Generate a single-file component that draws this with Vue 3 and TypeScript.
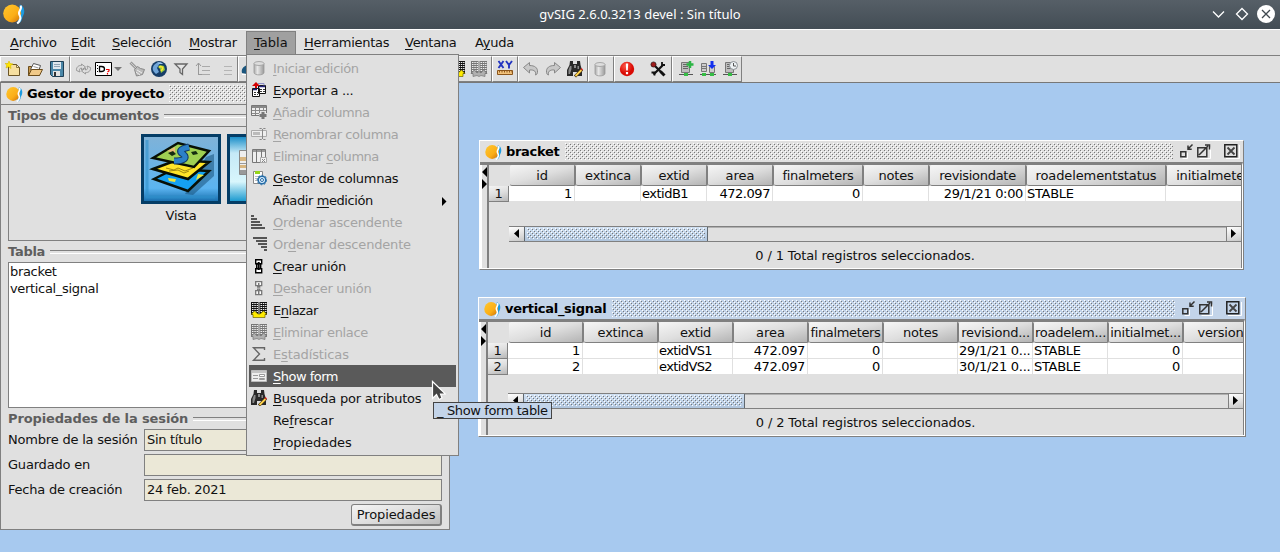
<script setup lang="ts">
interface MenuItem { label: string; track: number; icon?: string; off?: boolean; sub?: boolean; active?: boolean }
interface Column { name: string; width: number; align?: string; track?: number; cellTrack?: number }
interface TableWindow {
  id: string; title: string; active: boolean; columns: Column[]; rows: string[][]; thumb: number; status: string
}

const menus: { label: string; width: number; open?: boolean }[] = [
  { label: '&Archivo', width: 61 },
  { label: '&Edit', width: 41 },
  { label: '&Selección', width: 77 },
  { label: '&Mostrar', width: 65 },
  { label: '&Tabla', width: 50, open: true },
  { label: '&Herramientas', width: 101 },
  { label: '&Ventana', width: 70 },
  { label: 'A&yuda', width: 60 },
]

const toolGroups: { width: number; pad: number; icons: string[] }[] = [
  { width: 70, pad: 1, icons: ['new', 'open', 'save'] },
  { width: 168, pad: 1, icons: ['refresh', 'define', 'caret', 'brush', 'globe', 'filter', 'asc', 'lines'] },
  { width: 254, pad: 0, icons: ['blue', 'spacer', 'gap', 'gap', 'gap', 'gap', 'gap', 'gap', 'gap', 'gap', 'link', 'unlink'] },
  { width: 26, pad: 1, icons: ['xy'] },
  { width: 70, pad: 1, icons: ['undo', 'redo', 'find'] },
  { width: 26, pad: 0, icons: ['cylinder'] },
  { width: 58, pad: 1, icons: ['error', 'spacer', 'wrench'] },
  { width: 70, pad: 2, icons: ['hostAdd', 'hostDown', 'hostClock'] },
]

const items: MenuItem[] = [
  { label: '&Iniciar edición', icon: 'cylinder', off: true, track: -0.33 },
  { label: '&Exportar a ...', icon: 'export', track: -0.29 },
  { label: '&Añadir columna', icon: 'colAdd', off: true, track: -0.4 },
  { label: '&Renombrar columna', icon: 'colName', off: true, track: -0.4 },
  { label: 'Eliminar &columna', icon: 'colDel', off: true, track: -0.46 },
  { label: '&Gestor de columnas', icon: 'colGear', track: -0.28 },
  { label: 'Añadir &medición', sub: true, track: -0.4 },
  { label: '&Ordenar ascendente', icon: 'sortAsc', off: true, track: -0.2 },
  { label: 'Or&denar descendente', icon: 'sortDesc', off: true, track: -0.18 },
  { label: '&Crear unión', icon: 'join', track: -0.27 },
  { label: '&Deshacer unión', icon: 'unjoin', off: true, track: -0.25 },
  { label: 'E&nlazar', icon: 'link', track: -0.48 },
  { label: '&Eliminar enlace', icon: 'unlink', off: true, track: -0.37 },
  { label: 'E&stadísticas', icon: 'sigma', off: true, track: -0.12 },
  { label: '&Show form', icon: 'form', active: true, track: -0.5 },
  { label: '&Busqueda por atributos', icon: 'find', track: -0.2 },
  { label: 'Re&frescar', track: -0.1 },
  { label: '&Propiedades', track: -0.1 },
]

const windows: TableWindow[] = [
  {
    id: 'bracket', title: 'bracket', active: false, thumb: 184,
    status: '0 / 1 Total registros seleccionados.',
    columns: [
      { name: 'id', width: 66, align: 'right' }, { name: 'extinca', width: 66 },
      { name: 'extid', width: 66, cellTrack: -0.5 }, { name: 'area', width: 66, align: 'right', track: 0, cellTrack: -0.45 },
      { name: 'finalmeters', width: 90, align: 'right' }, { name: 'notes', width: 66 },
      { name: 'revisiondate', width: 97, align: 'right', track: -0.3, cellTrack: -0.35 }, { name: 'roadelementstatus', width: 140, track: -0.1 },
      { name: 'initialmeters', width: 100, track: -0.15 },
    ],
    rows: [['1', '', 'extidB1', '472.097', '0', '', '29/1/21 0:00', 'STABLE', '']],
  },
  {
    id: 'signal', title: 'vertical_signal', active: true, thumb: 222,
    status: '0 / 2 Total registros seleccionados.',
    columns: [
      { name: 'id', width: 75, align: 'right' }, { name: 'extinca', width: 75 },
      { name: 'extid', width: 75, cellTrack: -0.6 }, { name: 'area', width: 75, align: 'right', track: 0, cellTrack: -0.35 },
      { name: 'finalmeters', width: 75, align: 'right', track: -0.35 }, { name: 'notes', width: 75 },
      { name: 'revisiond...', width: 75, align: 'right' }, { name: 'roadelem...', width: 75 },
      { name: 'initialmet...', width: 75, align: 'right' }, { name: 'version', width: 75 },
    ],
    rows: [
      ['1', '', 'extidVS1', '472.097', '0', '', '29/1/21 0...', 'STABLE', '0', ''],
      ['2', '', 'extidVS2', '472.097', '0', '', '30/1/21 0...', 'STABLE', '0', ''],
    ],
  },
]

const session = [
  { label: 'Nombre de la sesión', value: 'Sin título' },
  { label: 'Guardado en', value: '' },
  { label: 'Fecha de creación', value: '24 feb. 2021' },
]

/** Splits "E&nlazar" into the text before, at and after the mnemonic letter. */
function parts(label: string): [string, string, string] {
  const i = label.indexOf('&')
  return [label.slice(0, i), label[i + 1], label.slice(i + 2)]
}

const tables = (ink: string) =>
  `<path fill="${ink}" d="M0 0h7.500v13H0zM8.500 0H16v13H8.500z"/><path stroke="#eee" stroke-dasharray="1.500 .8" d="M1 1.500h6M1 3.500h6M1 5.500h6M1 7.500h6M1 9.500h6M9.500 1.500h6M9.500 3.500h6M9.500 5.500h6M9.500 7.500h6M9.500 9.500h6"/>`
const host =
  '<path fill="#bdbdbd" stroke="#777" d="M3.500 1.500h8v10h-8z"/><path stroke="#666" d="M5 3.500h5M5 5.500h5M5 7.500h5"/><path stroke="#555" d="M1 13.500h14"/><path fill="#35bd45" d="M6 12h4v3H6z"/>'
const logo =
  '<path fill="#1d9be0" d="M16 1.500c3.500 1 5 5 4 8.500-.8 2.500-1.500 3-1.800 5-.4 2.500-2.200 4-4.200 4.500z"/><circle cx="8.800" cy="10" r="8.600" fill="url(#gold)"/><path fill="none" stroke="#fff" stroke-width="2" d="M16.800 2.500c1.500 3-1.500 4.500-1.500 7s1.800 3 1.200 5.500c-.4 2-1.500 3.500-3 4.500"/>'

const icons: Record<string, string> = {
  new: '<path fill="#f6dfa0" stroke="#6b5527" d="M3.500 3.500h8l3 3v8h-11z"/><path fill="#fff2c9" stroke="#6b5527" stroke-width=".8" d="M11.500 3.500v3h3z"/><path fill="#ffe500" stroke="#d7b900" stroke-width=".6" d="M4 0l1 2.500L8 3 5.500 4.500 6 7.500 3.500 5.800 1 7l.8-3L0 2.500h3z"/>',
  open: '<path fill="#c9984c" stroke="#6b4d1c" d="M1.500 14.500v-9h4l1 1h6v8z"/><path fill="#fff" stroke="#555" d="M3.500 8.500l3-6 7 2-2 6z"/><path stroke="#999" d="M6.500 5.500l5 1.500"/><path fill="#f0c988" stroke="#6b4d1c" d="M1.500 14.500l3-6h11l-3 6z"/>',
  save: '<path fill="#4a87a8" stroke="#1f3f55" d="M1.500 .500h13v15h-11l-2-2z"/><path fill="#dfe8ef" d="M4 1h8v7H4z"/><path fill="#e4e4e4" d="M4 10h7v5H4z"/><path fill="#333" d="M5 11h2v4H5z"/><path stroke="#8fa4b4" d="M5 3.500h6M5 5.500h6"/>',
  refresh: '<path fill="#ddd" stroke="#999" d="M1.500 9.500C1 6 4 4 6.500 4.500V3l4 3-4 3V7C4.500 7 4 9 5 11z M15.500 6.500C16 10 13 12 10.500 11.500V13l-4-3 4-3v2c2 0 2.500-2 1.500-4z"/>',
  define: '<path fill="#fff" stroke="#000" d="M.5 1.500h16v13H.5z"/><path stroke="#000" stroke-dasharray="1 2" d="M2.500 4v9"/><path fill="none" stroke="#000" stroke-width="1.300" d="M4.500 5.500h2c2 0 3 1 3 2.500s-1 2.500-3 2.500h-2z"/><path fill="none" stroke="#e00" stroke-width="1.200" d="M11 8.500h3v1.500l-1.500 1M12.500 12v1.500"/>',
  caret: '<path fill="#777" d="M0 6h8L4 10z"/>',
  brush: '<path stroke="#999" stroke-width="3" d="M1.500 1.500l6 6"/><path stroke="#ccc" d="M1.500 1.500l6 6"/><path fill="#bbb" stroke="#888" d="M5.500 8.500l3-3 3 2 4 1-2 5-6 1.500z"/><path stroke="#eee" d="M8 9l5 3M7 11l4 3"/>',
  globe: '<circle cx="8" cy="8" r="8" fill="#163d68"/><path fill="#6fa4d8" d="M2 6c1-3 4-5 7-4L6 7l2 4-3 2C3 11 1 9 2 6z"/><path fill="#8ec63f" d="M9 4l4 1 1 4-4 3-1-4-2-2z"/><path fill="none" stroke="#ffe72d" stroke-width="1.500" d="M8 6c4-1 5 1 2 4"/><path fill="#9bc7ef" d="M6 1.500C8 1 11 1 12 3L8 3z"/>',
  filter: '<path fill="#e5e5e5" stroke="#666" stroke-width="1.300" d="M2 3h12L9.500 8v5.500L7 11.500V8z"/>',
  asc: '<path stroke="#999" fill="none" d="M3.500 14V2M1 5l2.500-3L6 5M3 13.500h4"/><path stroke="#aaa" d="M7 5.500h8M7 9.500h8M7 13.500h8"/>',
  lines: '<path stroke="#b5b5b5" d="M7 5.500h8M7 9.500h8M7 13.500h8"/>',
  blue: '<path fill="#1b567e" d="M0 12c-1-4 1-6 5-8v9z"/><path stroke="#fff" d="M0 13.500h5"/>',
  xy: '<path fill="none" stroke="#2335c0" stroke-width="1.900" d="M1.500 0l5 7M6.500 0l-5 7M9 0l3 4 3-4M12 4v3.500"/><path fill="#f2c27b" stroke="#8b551b" d="M.5 9.500h15v4H.5z"/><path stroke="#8b551b" stroke-dasharray="1 1.500" stroke-width="2" d="M2 10.500h13"/>',
  undo: '<path fill="#c8c8c8" stroke="#888" d="M.5 6.500l6-5v3c5 0 8.500 2 8 7-.2 1.500-1 2.300-2 2.500 1-3-1-5.500-6-5v3z"/>',
  redo: '<path fill="#c8c8c8" stroke="#888" d="M15.500 6.500l-6-5v3c-5 0-8.500 2-8 7 .2 1.500 1 2.300 2 2.500-1-3 1-5.500 6-5v3z"/>',
  find: '<path fill="#292929" d="M3 0h3v3h4V0h3l.5 4L15 9v6h-5v-4H6v4H0V9l2.500-5z"/><path fill="#8a8a8a" d="M3 5h1.500v3L3 13H1.500V9zM10.500 5h1.500v3h-1.500zM7 4h2v3H7z"/><path stroke="#3a2a10" stroke-width="3" d="M8 15.500l7-7"/><path stroke="#ffd34d" stroke-width="1.800" d="M8.500 15l6-6"/><path fill="#d22" d="M14.500 7l1.500 1.500-1 1L13.500 8z"/>',
  cylinder: '<path fill="url(#cyl)" stroke="#999" stroke-width=".8" d="M3 3.500v9c0 3.200 10 3.200 10 0v-9"/><ellipse cx="8" cy="3.500" rx="5" ry="2" fill="#ddd" stroke="#999" stroke-width=".8"/>',
  error: '<circle cx="8" cy="8" r="7.200" fill="url(#red)"/><path fill="#fff" d="M6.800 2.500h2.400l-.4 7H7.200zM6.900 11h2.200v2.200H6.900z"/>',
  wrench: '<path stroke="#111" stroke-width="2.200" d="M3.500 13.500L12.500 4.500M4 4l7 7"/><path fill="none" stroke="#111" stroke-width="1.800" d="M12 1v3h3M1.500 11.500h3v3"/><circle cx="3.500" cy="3.500" r="2.600" fill="#9d1c1c" stroke="#111" stroke-width=".6"/><path stroke="#111" stroke-width="3" d="M10.500 10.500l4 4"/>',
  hostAdd: host + '<path stroke="#2bb544" stroke-width="2.500" d="M12 0v7M8.500 3.500h7"/>',
  hostDown: '<path fill="#ccc" stroke="#777" d="M1.500 2.500h5v8h-5zM9.500 5.500h5v6h-5z"/><path stroke="#777" d="M2 5.500h4M2 7.500h4"/><path stroke="#555" d="M0 13.500h16"/><path fill="#35bd45" d="M2 12h4v3H2zM10 12h4v3h-4z"/><path fill="#1230ee" d="M10.500 0h3v4H16l-4 4-4-4h2.500z"/>',
  hostClock: host + '<circle cx="11.500" cy="4.500" r="4" fill="#eef2f5" stroke="#8a8f94"/><path fill="none" stroke="#555" d="M11.500 2v3H14"/>',
  export: '<path fill="#fff" stroke="#111" d="M1.500 6.500h7v8h-7zM7.500 3.500h7v8h-7z"/><path stroke="#22227a" stroke-width="1.500" d="M8 4.500h6M2 7.500h4"/><path stroke="#333" stroke-dasharray="2 1" d="M9 7.500h5M9 9.500h5M3 10.500h4M3 12.500h4"/><path fill="#d40000" d="M1 4l4-4 4 4H6v2H4V4z"/><path fill="none" stroke="#8f92c8" d="M7 1.500h6v2"/>',
  colAdd: '<path fill="#eee" stroke="#777" d="M.5 1.500h15v10H.5z"/><path fill="#888" d="M1 2h14v2H1z"/><path stroke="#888" d="M4.500 2v9M8.500 2v9M12.500 2v9M1 6.500h14M1 9.500h14"/><path stroke="#e0e0e0" stroke-width="5" d="M12 7v9M8 11.500h8"/><path stroke="#777" stroke-width="3" d="M12 8v7M8.500 11.500h7"/>',
  colName: '<path fill="#eee" stroke="#aaa" d="M.5 4.500h15v6H.5z"/><path fill="#bbb" d="M2 6h7v3H2z"/><path fill="none" stroke="#888" d="M8.500 2.500h2l1 1 1-1h2M11.500 3v10M8.500 13.500h2l1-1 1 1h2"/>',
  colDel: '<path fill="#eee" stroke="#777" d="M1.500 1.500h13v13h-13z"/><path fill="#999" d="M2 2h12v2H2z"/><path stroke="#777" d="M5.500 2v12M10.500 2v12"/><path fill="#f2f2f2" stroke="#aaa" d="M9.500 9.500h6v5h-6z"/><path stroke="#888" d="M11 11l3 3M14 11l-3 3"/>',
  colGear: '<path fill="#fff" stroke="#888" d="M2.500 1.500h9v12h-9z"/><path fill="#95d51b" d="M4 1h5v3H4z"/><path stroke="#bbb" d="M4 6.500h6M4 8.500h4M4 10.500h4"/><circle cx="11" cy="10" r="3.800" fill="#dcefff" stroke="#246ca7" stroke-width="1.600"/><circle cx="11" cy="10" r="4.800" fill="none" stroke="#246ca7" stroke-dasharray="1.600 2"/><circle cx="11" cy="10" r="1.500" fill="#fff" stroke="#246ca7"/>',
  sortAsc: '<path fill="#555" d="M0 1h3v2H0zM0 4h6v2H0zM0 7h9v2H0zM0 10h11v2H0zM0 13h14v2H0z"/>',
  sortDesc: '<path fill="#555" d="M2 1h14v2H2zM5 4h11v2H5zM7 7h9v2H7zM10 10h6v2h-6zM13 13h3v2h-3z"/>',
  join: '<path fill="#fff" stroke="#000" stroke-width="1.400" d="M4.700 1.700h6v4h-2l1 1v3l-1 1h2v4h-6v-4h2l-1-1v-3l1-1h-2z"/><path stroke="#000" stroke-width="2" d="M7.700 4v8"/>',
  unjoin: '<path fill="#fff" stroke="#777" stroke-width="1.300" d="M4.700 1.700h6v4h-2v1.500h-2V5.700h-2zM4.700 14.700h6v-4h-2V9.200h-2v1.500h-2z"/><path stroke="#777" stroke-width="1.500" d="M7.700 3v4M7.700 10v4"/>',
  link: tables('#111') + '<path fill="#ffeb00" stroke="#6f6500" stroke-width=".7" d="M0 12.500l3.500-3.500L7 12h2l3.500-3 3.500 3.500h-2v3H2v-3z"/>',
  unlink: tables('#777') + '<path fill="#b0b0b0" stroke="#777" stroke-width=".7" d="M0 12.500l3.500-3.500 2.500 3 2-1.500 2 1.500 2.500-3 3.500 3.500h-2v3l-4-1-2 1-2-1-4 1v-3z"/>',
  sigma: '<path fill="none" stroke="#666" stroke-width="1.400" d="M13.500 4V1.700H2.500L8.500 8l-6 6.300h11V12"/>',
  form: '<path fill="#eee" stroke="#bbb" d="M.5 2.500h15v11H.5z"/><path fill="#c4c4c4" d="M1 3h14v2H1z"/><path stroke="#999" d="M2 7.500h5M2 10.500h5"/><path fill="#fff" stroke="#999" d="M8.500 6.500h5v2h-5zM8.500 10.500h5v1h-5z"/>',
}
</script>

<template>
  <div class="app">
    <svg class="defs" width="0" height="0">
      <defs>
        <linearGradient id="gold" x1="0" y1="0" x2="1" y2="1"><stop offset="0" stop-color="#ffc72e" /><stop offset=".6" stop-color="#fbae17" /><stop offset="1" stop-color="#c96b08" /></linearGradient>
        <linearGradient id="cyl"><stop offset="0" stop-color="#aaa" /><stop offset=".35" stop-color="#e6e6e6" /><stop offset="1" stop-color="#999" /></linearGradient>
        <radialGradient id="red" cx=".4" cy=".3"><stop offset="0" stop-color="#ff5a4a" /><stop offset="1" stop-color="#d90b05" /></radialGradient>
        <linearGradient id="sky" x1="0" y1="0" x2="0" y2="1"><stop offset="0" stop-color="#7fb2d8" /><stop offset=".8" stop-color="#5bb4f0" /><stop offset="1" stop-color="#1a70b0" /></linearGradient>
        <linearGradient id="shine" x1="0" y1="0" x2="0" y2="1"><stop offset="0" stop-color="#1c8fc9" /><stop offset=".25" stop-color="#c5e9f7" /><stop offset=".7" stop-color="#d8f6fc" /><stop offset="1" stop-color="#1d9bd0" /></linearGradient>
      </defs>
    </svg>

    <header class="titlebar">
      <svg class="app-logo" viewBox="0 0 21 20" v-html="logo"></svg>
      <span class="app-title">gvSIG 2.6.0.3213 devel : Sin título</span>
      <svg class="win-buttons" width="72" height="28" fill="none" stroke="#fff" stroke-width="1.300">
        <path d="M5 11.500l5.500 5.500L16 11.500M34 8.500l5.500 5.500-5.500 5.500L28.500 14z" />
        <circle cx="58" cy="14" r="9" fill="#fff" stroke="none" />
        <path stroke="#3f484f" d="M54 10l8 8M62 10l-8 8" />
      </svg>
    </header>

    <nav class="menubar">
      <span v-for="m in menus" :key="m.label" class="menu" :class="{ open: m.open }" :style="{ width: m.width + 'px' }">
        {{ parts(m.label)[0] }}<u>{{ parts(m.label)[1] }}</u>{{ parts(m.label)[2] }}
      </span>
    </nav>

    <div class="toolbar">
      <div v-for="(g, i) in toolGroups" :key="i" class="group" :style="{ width: g.width + 'px', paddingLeft: g.pad + 'px' }">
        <span v-for="(n, k) in g.icons" :key="k" class="tool" :class="n">
          <svg viewBox="0 0 16 16" v-html="icons[n] ?? ''"></svg>
        </span>
      </div>
    </div>

    <main class="desktop">
      <section class="project">
        <div class="frame-title">
          <svg class="logo" viewBox="0 0 21 20" v-html="logo"></svg>
          <b>Gestor de proyecto</b>
          <i class="bumps"></i>
        </div>
        <div class="project-body">
          <h4 class="h-docs"><span>Tipos de documentos</span></h4>
          <div class="docs">
            <figure>
              <svg width="80" height="70" viewBox="0 0 80 70">
                <path fill="#043d66" d="M0 0h80v70H0z" /><path fill="url(#sky)" d="M3 3h74v64H3z" />
                <path fill="none" stroke="#2d8fca" stroke-width="3" opacity=".6" d="M6 6v57h68" />
                <path fill="#17527c" opacity=".55" d="M44 60l8 1 21-19V20l-8 3z" />
                <path fill="#15a1f1" stroke="#081006" stroke-width="2.500" d="M13 45l20-10 35 2-21 20z" />
                <path fill="#eee83c" d="M27 44l8 1-1 3-6-1zM57 40l6 1-8 5z" />
                <path fill="#ffe528" stroke="#081006" stroke-width="2.500" d="M12 35l24-9 32 2-21 17z" />
                <path fill="none" stroke="#a08a10" d="M25 34l8 2 4-2 7 3 8-3M28 37l9-1 6 3 5-2" />
                <path fill="#9fd052" stroke="#081006" stroke-width="2.500" d="M12 24L37 9l31 8-15 16z" />
                <path fill="#e7ba78" d="M26 17l8-4v6z" />
                <path fill="none" stroke="#123a67" stroke-width="7" d="M48 13c-8 2-11 4-6 7 5 4 1 7-9 7" />
                <path fill="none" stroke="#2c80c8" stroke-width="5" d="M48 13c-8 2-11 4-6 7 5 4 1 7-9 7" />
                <path fill="#152c10" d="M27 19l5-2 3 3-4 2zM50 18l5-1 2 3-5 1z" />
              </svg>
              <figcaption>Vista</figcaption>
            </figure>
            <figure>
              <svg width="80" height="70" viewBox="0 0 80 70">
                <path fill="#043d66" d="M0 0h80v70H0z" /><path fill="url(#shine)" d="M3 3h74v64H3z" />
                <path fill="#eee" stroke="#888" d="M12.500 16.500h55v24h-55z" /><path fill="#d8b680" d="M13 23h54v4H13zM13 31h54v3H13z" />
                <path fill="#999" d="M13 29h54v1H13zM13 36h54v4H13z" />
              </svg>
            </figure>
          </div>
          <h4 class="h-list"><span>Tabla</span></h4>
          <div class="list">
            <p>bracket</p>
            <p>vertical_signal</p>
          </div>
          <h4 class="h-session"><span>Propiedades de la sesión</span></h4>
          <div class="fields">
            <div v-for="f in session" :key="f.label" class="field">
              <label>{{ f.label }}</label>
              <span class="input">{{ f.value }}</span>
            </div>
          </div>
          <button class="props">Propiedades</button>
        </div>
      </section>

      <section v-for="w in windows" :key="w.id" class="table-window" :class="[w.id, { active: w.active }]">
        <div class="frame-title">
          <svg class="logo" viewBox="0 0 21 20" v-html="logo"></svg>
          <b>{{ w.title }}</b>
          <i class="bumps"></i>
          <svg class="controls" width="62" height="17" fill="none">
            <path stroke="#fff" d="M3.500 15.500h5v-6M20.500 15.500h11v-11M60.500 2v13.500H47" />
            <path stroke="#333" stroke-width="1.500" d="M1.800 8.800h5v5h-5zM13.500 1.500l-4 4M9 2.500v3.700h3.700" />
            <path stroke="#333" stroke-width="1.500" d="M18.800 4.800h9v9h-9zM20 12l9-9M26 2h4.500v4.500" />
            <path stroke="#222" stroke-width="1.500" d="M45.800 1.800h12v12h-12z" />
            <path stroke="#444" stroke-width="1.800" d="M48.500 4.500l7 7M55.500 4.500l-7 7" />
          </svg>
        </div>
        <div class="content">
          <div class="splitter">
            <svg width="6" height="26"><path d="M5 2v10L0 7zM0 14v10l5-5z" /></svg>
          </div>
          <div class="pane">
            <div class="grid">
              <div class="row head">
                <span class="corner"></span>
                <span v-for="c in w.columns" :key="c.name" class="th" :style="{ width: c.width + 'px', letterSpacing: (c.track ?? -0.25) + 'px' }">{{ c.name }}</span>
              </div>
              <div v-for="(r, ri) in w.rows" :key="ri" class="row data">
                <span class="rownum">{{ ri + 1 }}</span>
                <span v-for="(v, ci) in r" :key="ci" class="td" :class="w.columns[ci].align" :style="{ width: w.columns[ci].width + 'px', letterSpacing: (w.columns[ci].cellTrack ?? -0.3) + 'px' }">{{ v }}</span>
              </div>
            </div>
            <div class="scroll">
              <span class="arrow"><svg width="6" height="10"><path d="M5 0v9L0 4.500z" /></svg></span>
              <span class="thumb" :style="{ width: w.thumb + 'px' }"><i class="bumps"></i></span>
              <span class="track"></span>
              <span class="arrow right"><svg width="6" height="10"><path d="M0 0v9l5-4.500z" /></svg></span>
            </div>
            <div class="status">{{ w.status }}</div>
          </div>
        </div>
      </section>
    </main>

    <div class="popup">
      <div v-for="it in items" :key="it.label" class="item" :class="{ off: it.off, active: it.active }">
        <svg class="item-icon" viewBox="0 0 16 16" v-html="it.icon ? icons[it.icon] : ''"></svg>
        <span :style="{ letterSpacing: it.track + 'px' }">{{ parts(it.label)[0] }}<u>{{ parts(it.label)[1] }}</u>{{ parts(it.label)[2] }}</span>
        <svg v-if="it.sub" class="more" width="5" height="9"><path d="M0 0v9l4.500-4.500z" /></svg>
      </div>
    </div>

    <div class="tooltip"><span class="dash">_</span>Show form table</div>
    <svg class="cursor" width="15" height="23">
      <path fill="#444" stroke="#fff" stroke-width="1.200" d="M1.500 1.500v17l4-4 2.500 5 3-1.500-1.500-4h5z" />
    </svg>
  </div>
</template>

<style>
body { margin: 0; overflow: hidden; }
</style>

<style scoped>
.app { position: relative; display: flex; flex-direction: column; width: 1280px; height: 552px; overflow: hidden; background: #e0e0e0; color: #111; font: 13px/16px "DejaVu Sans", "Liberation Sans", sans-serif; letter-spacing: -0.2px; }
.app * { box-sizing: border-box; }
.defs { position: absolute; }
u { text-decoration: underline; text-underline-offset: 2px; text-decoration-thickness: 1px; }

.titlebar { position: relative; display: flex; align-items: center; justify-content: center; height: 29px; flex: none; padding-bottom: 2px; background: linear-gradient(#565f67, #434d55); color: #fff; font: 13px/20px "Noto Sans", sans-serif; letter-spacing: 0; }
.app-logo { position: absolute; left: 3px; top: 3px; width: 22px; height: 21px; }
.win-buttons { position: absolute; right: 0; top: 0; }

.menubar { display: flex; height: 27px; flex: none; border-top: 1px solid #fff; border-bottom: 1px solid #808080; padding-left: 2px; letter-spacing: -0.27px; }
.menu { height: 25px; padding-left: 8px; line-height: 26px; white-space: nowrap; }
.menu.open { margin: 1px 0 0; background: #a0a0a0; border: 1px solid #808080; padding-left: 7px; line-height: 22px; height: 24px; letter-spacing: 0; }

.toolbar { display: flex; height: 27px; flex: none; border-bottom: 1px solid #777; }
.group { display: flex; align-items: center; height: 26px; border: 1px solid; border-color: #fff #808080 #808080 #fff; overflow: hidden; }
.tool { width: 22px; height: 24px; flex: none; display: flex; align-items: center; justify-content: center; }
.tool svg { width: 16px; height: 16px; overflow: visible; }
.tool.define { width: 17px; }
.tool.caret { width: 15px; }
.tool.caret svg { margin-left: 7px; }
.tool.spacer { width: 9px; }

.desktop { position: relative; flex: 1; background: #a7c9ef; }
.frame-title { display: flex; align-items: center; height: 21px; }
.frame-title b { color: #000; }
.logo { width: 17px; height: 16px; flex: none; }
.bumps { flex: 1; height: 17px; background-image:
  conic-gradient(from 270deg at 1px 1px, #fff 90deg, transparent 0), conic-gradient(from 270deg at 1px 1px, #fff 90deg, transparent 0),
  conic-gradient(from 270deg at 1px 1px, #777 90deg, transparent 0), conic-gradient(from 270deg at 1px 1px, #777 90deg, transparent 0);
  background-size: 4px 4px; background-position: 0 0, 2px 2px, 1px 1px, 3px 3px; }

.project { position: absolute; left: 0; top: 0; width: 450px; height: 447px; background: #e0e0e0; border: 1px solid #808080; border-top: 0; }
.project .frame-title { height: 22px; padding-left: 5px; border-bottom: 1px solid #808080; }
.project .frame-title b { margin: 0 5px 0 4px; }
.project-body { display: flex; flex-direction: column; padding: 0 7px; }
h4 { display: flex; align-items: center; margin: 0; font: bold 13px/16px "DejaVu Sans", sans-serif; color: #5e5e5e; flex: none; letter-spacing: -0.28px; }
h4::after { content: ""; flex: 1; height: 2px; margin-left: 5px; border-top: 1px solid #808080; border-bottom: 1px solid #fff; }
.h-docs { height: 21px; }
.docs { height: 115px; border: 1px solid #808080; display: flex; padding: 7px 0 0 132px; gap: 6px; overflow: hidden; }
figure { margin: 0; width: 80px; text-align: center; flex: none; }
figure svg { display: block; }
figcaption { margin-top: 4px; }
.h-list { height: 21px; }
.list { height: 146px; background: #fff; border: 1px solid #808080; padding: 0 1px; letter-spacing: -0.33px; }
.list p { margin: 0; height: 17px; line-height: 17px; }
.h-session { height: 21px; letter-spacing: -0.13px; }
.fields { display: flex; flex-direction: column; gap: 3px; }
.field { display: flex; }
.field label { width: 136px; line-height: 22px; white-space: nowrap; }
.input { flex: 1; height: 22px; line-height: 20px; padding-left: 2px; background: #ebe8d7; border: 1px solid #808080; letter-spacing: -0.3px; }
.props { align-self: flex-end; width: 91px; height: 22px; margin-top: 3px; padding: 0; font: inherit; letter-spacing: -0.1px; color: inherit; white-space: nowrap; background: linear-gradient(165deg, #f4f4f4, #dedede 50%, #bbb); border: 1px solid #808080; border-right-width: 2px; border-bottom-width: 2px; border-radius: 3px; }

.table-window { position: absolute; background: #e0e0e0; border: 1px solid #808080; border-top-color: #fff; border-left-color: #fff; display: flex; flex-direction: column; }
.bracket { left: 479px; top: 57px; width: 765px; height: 130px; }
.signal { left: 478px; top: 214px; width: 768px; height: 140px; }
.table-window .frame-title { flex: none; padding: 0 2px 0 5px; }
.table-window.active .frame-title { background: #c3d4e9; }
.table-window .frame-title b { margin: 0 6px 0 4px; letter-spacing: -0.3px; }
.controls { flex: none; margin-left: 6px; }
.content { flex: 1; min-height: 0; display: flex; border-top: 3px solid #808080; border-right: 1px solid #fff; border-bottom: 1px solid #fff; }
.splitter { width: 9px; flex: none; border-left: 2px solid #fff; border-right: 2px solid #808080; }
.pane { flex: 1; min-width: 0; display: flex; flex-direction: column; border-right: 1px solid #808080; }
.grid { flex: 1; overflow: hidden; }
.row { display: flex; }
.corner, .rownum { width: 20px; flex: none; }
.corner { width: 21px; }
.th { flex: none; height: 21px; line-height: 21px; text-align: center; white-space: nowrap; background: linear-gradient(165deg, #f6f6f6, #dedede 50%, #b4b4b4); border-bottom: 1px solid #808080; border-right: 2px solid #808080; border-radius: 2px; }
.rownum { height: 16px; line-height: 16px; text-align: center; background: linear-gradient(165deg, #f4f4f4, #dedede 50%, #b8b8b8); border-bottom: 1px solid #808080; border-right: 1px solid #808080; }
.td { flex: none; height: 16px; line-height: 15px; background: #fff; border-right: 1px solid #e0e0e0; border-bottom: 1px solid #e0e0e0; padding: 0 1px; white-space: nowrap; overflow: hidden; color: #000; }
.td.right { text-align: right; padding-right: 2px; }
.scroll { display: flex; flex: none; height: 16px; margin-left: 20px; border-top: 1px solid #808080; border-bottom: 1px solid #808080; box-shadow: -20px 15px 0 -15px #808080; }
.arrow { width: 15px; flex: none; display: flex; align-items: center; justify-content: center; background: linear-gradient(165deg, #fff, #c8c8c8); }
.arrow.right { border-left: 1px solid #808080; }
.thumb { display: flex; flex: none; padding: 1px 2px; background: linear-gradient(#d0e0f2, #b0c5dd); border: 1px solid #60686f; border-top: 0; border-bottom: 0; }
.thumb .bumps { height: 11px; }
.track { flex: 1; border-top: 1px solid #b0b0b0; }
.status { height: 26px; flex: none; line-height: 28px; text-align: center; letter-spacing: -0.13px; }

.popup { position: absolute; left: 246px; top: 54px; width: 213px; height: 402px; padding: 2px; background: #e0e0e0; border: 1px solid #808080; }
.item { display: flex; align-items: center; height: 22px; padding: 2px 0 0 2px; white-space: nowrap; }
.item-icon { width: 16px; height: 16px; margin-right: 6px; flex: none; position: relative; top: -1px; }
.item.off { color: #a4a4a4; }
.item.active { background: #5a5a5a; color: #fff; }
.more { margin-left: auto; margin-right: 9px; }

.tooltip { position: absolute; left: 433px; top: 402px; width: 119px; height: 17px; border: 1px solid #444; background: #c3d4e9; padding-left: 3px; line-height: 15px; white-space: nowrap; letter-spacing: -0.4px; }
.dash { display: inline-block; width: 10px; }
.cursor { position: absolute; left: 431px; top: 380px; }
</style>
